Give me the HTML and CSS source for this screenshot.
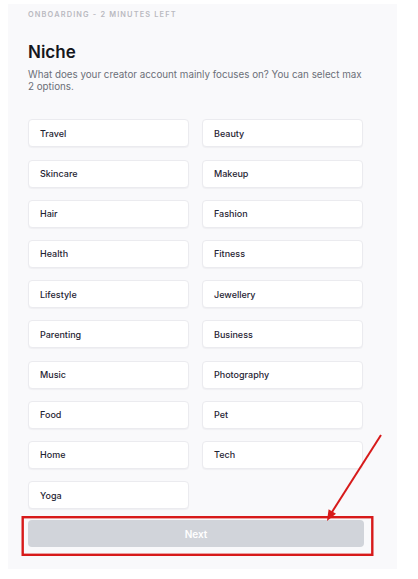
FILE: index.html
```html
<!DOCTYPE html>
<html lang="en">
<head>
<meta charset="utf-8">
<title>Onboarding - Niche</title>
<link rel="stylesheet" href="styles.css">
</head>
<body>
<main class="panel">
  <p class="eyebrow">Onboarding - 2 minutes left</p>
  <h1 class="title">Niche</h1>
  <p class="subtitle">What does your creator account mainly focuses on? You can select max 2 options.</p>
  <div class="options">
    <button class="option" type="button">Travel</button>
    <button class="option" type="button">Beauty</button>
    <button class="option" type="button">Skincare</button>
    <button class="option" type="button">Makeup</button>
    <button class="option" type="button">Hair</button>
    <button class="option" type="button">Fashion</button>
    <button class="option" type="button">Health</button>
    <button class="option" type="button">Fitness</button>
    <button class="option" type="button">Lifestyle</button>
    <button class="option" type="button">Jewellery</button>
    <button class="option" type="button">Parenting</button>
    <button class="option" type="button">Business</button>
    <button class="option" type="button">Music</button>
    <button class="option" type="button">Photography</button>
    <button class="option" type="button">Food</button>
    <button class="option" type="button">Pet</button>
    <button class="option" type="button">Home</button>
    <button class="option" type="button">Tech</button>
    <button class="option" type="button">Yoga</button>
  </div>
  <button class="next" type="button" disabled>Next</button>
</main>
<svg class="annotation" width="418" height="579" viewBox="0 0 418 579" aria-hidden="true">
  <rect x="22.7" y="517.2" width="349.6" height="37.6" fill="none" stroke="#d71a1a" stroke-width="2.4"/>
  <line x1="381" y1="435" x2="332" y2="512" stroke="#d71a1a" stroke-width="2"/>
  <polygon points="327,521 336,513.8 328.6,509.2" fill="#d71a1a"/>
</svg>
</body>
</html>
```

FILE: styles.css
```css
html, body {
  margin: 0;
  padding: 0;
  background: #ffffff;
}

body {
  font-family: Inter, "Noto Sans", "Liberation Sans", sans-serif;
  color: #111827;
}

.panel {
  box-sizing: border-box;
  width: 389px;
  height: 565px;
  margin: 4px 0 0 8px;
  padding: 6px 33px 0 20px;
  background: #f9f9fb;
  display: flex;
  flex-direction: column;
}

.eyebrow {
  margin: 0;
  font-size: 7.4px;
  line-height: 10px;
  font-weight: 600;
  letter-spacing: 1.15px;
  text-transform: uppercase;
  color: #b9bac1;
}

.title {
  margin: 22px 0 0;
  font-size: 17px;
  line-height: 20px;
  font-weight: 600;
  color: #15171c;
}

.subtitle {
  margin: 6.7px 0 0;
  font-size: 9.8px;
  line-height: 12.6px;
  color: #6b6f78;
  max-width: 337px;
}

.options {
  margin-top: 25.5px;
  display: grid;
  grid-template-columns: 161px 161px;
  grid-auto-rows: 28px;
  column-gap: 13px;
  row-gap: 12.2px;
}

.option {
  box-sizing: border-box;
  display: flex;
  align-items: center;
  padding: 0 0 0 11px;
  margin: 0;
  background: #ffffff;
  border: 1px solid #ebebef;
  border-radius: 4px;
  box-shadow: 0 1px 1px rgba(17, 24, 39, 0.04);
  font-family: inherit;
  font-size: 9px;
  font-weight: 500;
  color: #1f2433;
  text-align: left;
}

.next {
  box-sizing: border-box;
  margin-top: 11px;
  width: 336px;
  height: 27px;
  border: 0;
  border-radius: 4px;
  background: #d1d4da;
  color: #ffffff;
  font-family: inherit;
  font-size: 10px;
  font-weight: 600;
}

.annotation {
  position: absolute;
  left: 0;
  top: 0;
  pointer-events: none;
}
```
